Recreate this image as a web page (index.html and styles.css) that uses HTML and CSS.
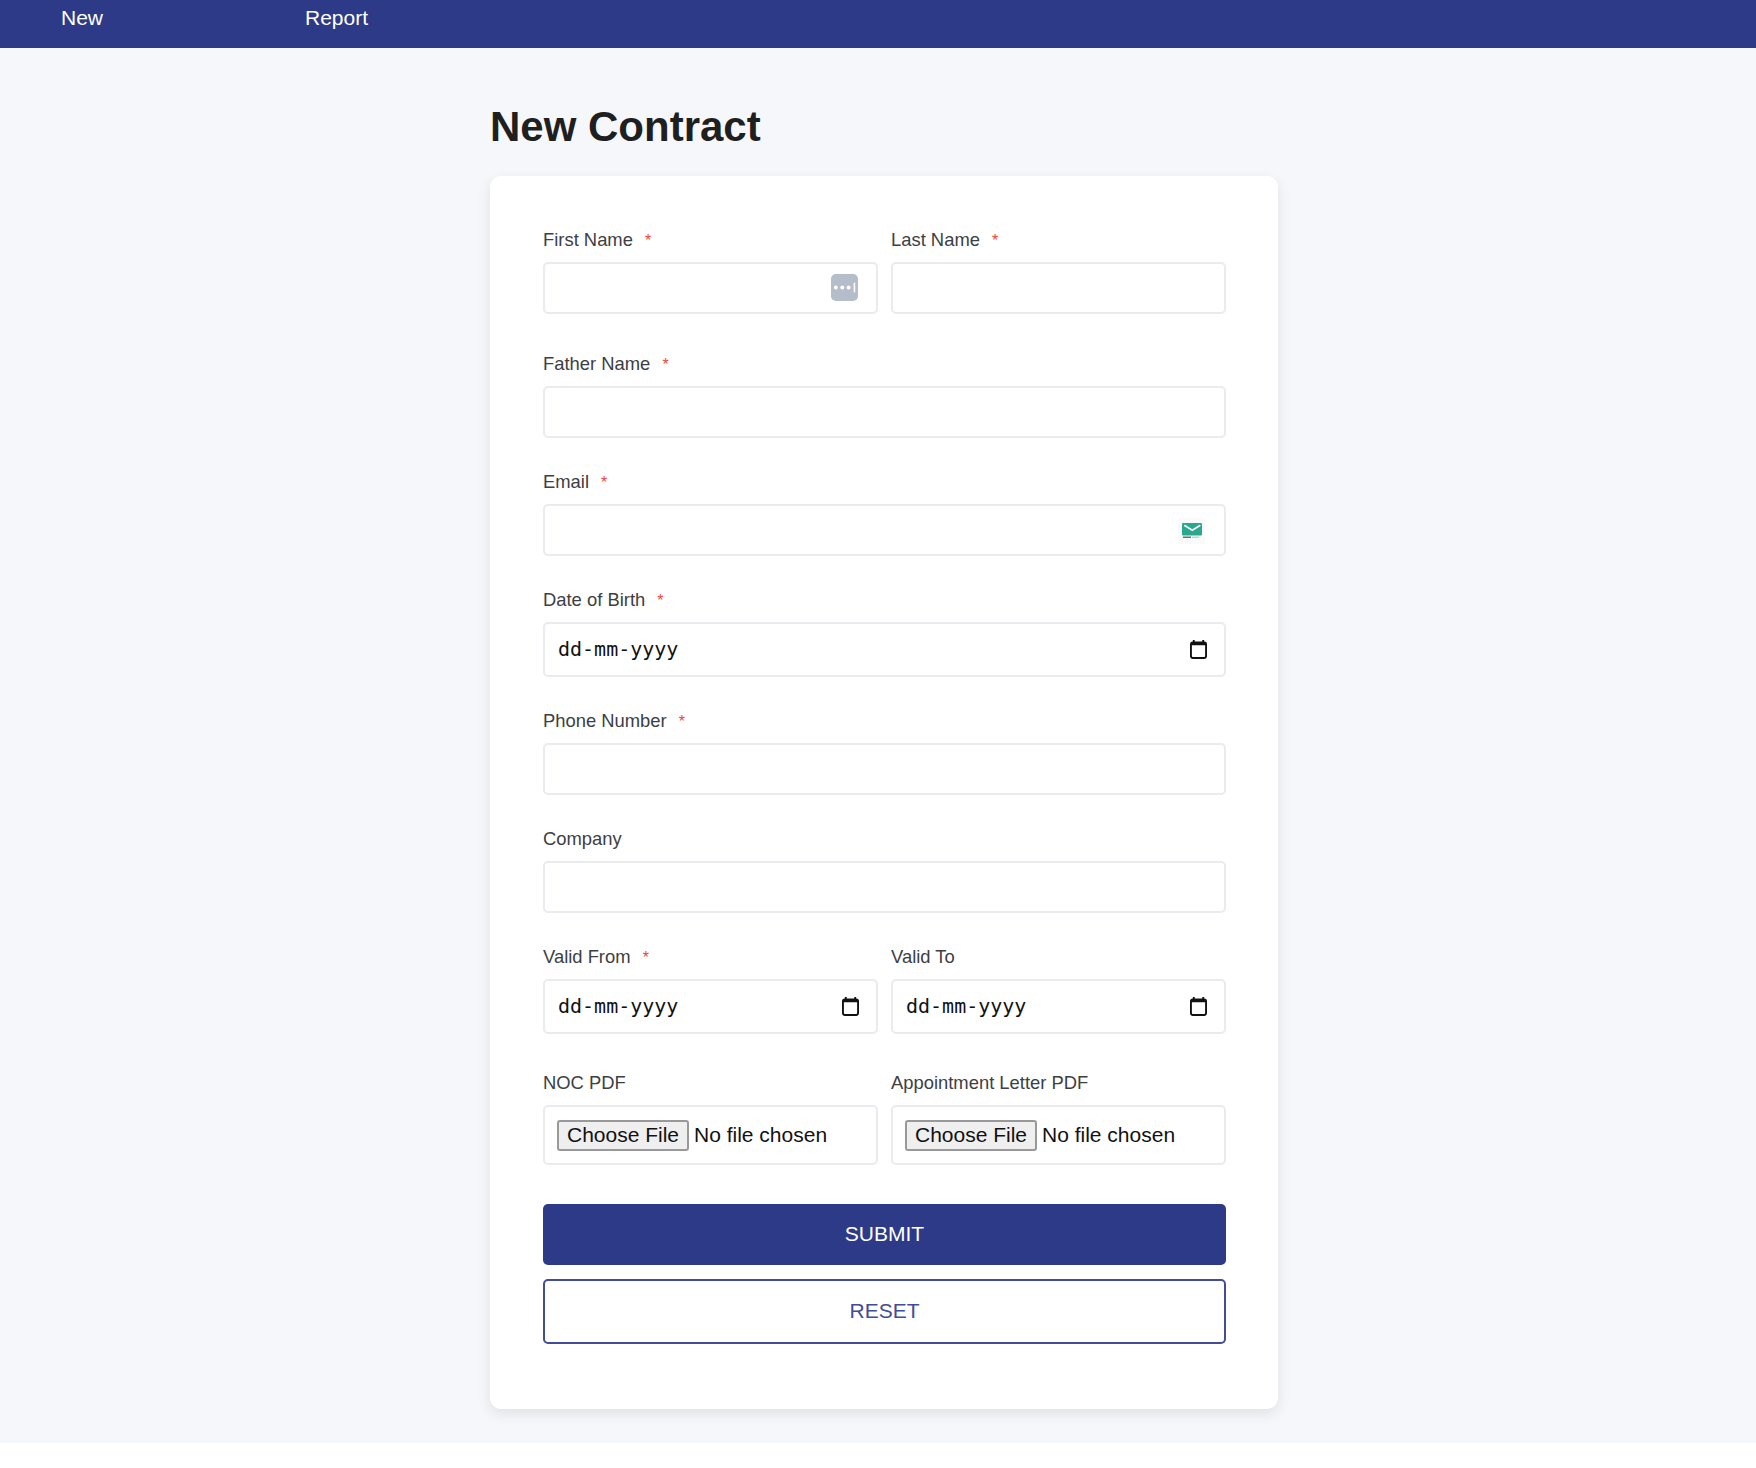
FILE: index.html
```html
<!DOCTYPE html>
<html lang="en">
  <head>
    <meta charset="UTF-8" />
    <meta name="viewport" content="width=device-width, initial-scale=1.0" />
    <title>New Contract</title>
    <link rel="stylesheet" href="styles.css">
  </head>
  <body>
    <nav class="topbar">
      <a href="#" class="topbar-link">New</a>
      <a href="#" class="topbar-link">Report</a>
    </nav>

    <main class="page">
      <div class="container">
        <h1>New Contract</h1>
        <form class="card">
          <div class="row">
            <div class="field">
              <label for="firstName">First Name <span class="req">*</span></label>
              <div class="control">
                <input type="text" id="firstName" class="input" />
                <svg class="icon-pass" width="27" height="27" viewBox="0 0 28 28">
                  <rect width="28" height="28" rx="5" fill="#b6bdca" />
                  <circle cx="5" cy="14" r="2" fill="#fff" />
                  <circle cx="11.7" cy="14" r="2" fill="#fff" />
                  <circle cx="18.3" cy="14" r="2" fill="#fff" />
                  <rect x="23.5" y="9" width="1.6" height="10" fill="#fff" />
                </svg>
              </div>
            </div>
            <div class="field">
              <label for="lastName">Last Name <span class="req">*</span></label>
              <div class="control"><input type="text" id="lastName" class="input" /></div>
            </div>
          </div>

          <div class="field">
            <label for="fatherName">Father Name <span class="req">*</span></label>
            <div class="control"><input type="text" id="fatherName" class="input" /></div>
          </div>

          <div class="field">
            <label for="email">Email <span class="req">*</span></label>
            <div class="control">
              <input type="email" id="email" class="input" />
              <svg class="icon-mail" width="27" height="26" viewBox="0 0 27 26">
                <rect width="27" height="26" rx="2" fill="#fafafa" />
                <rect x="4" y="5" width="20" height="12.5" rx="1" fill="#2aa88e" />
                <path d="M6.3 7.3 L14.3 12.3 L22.3 7.3" fill="none" stroke="#fff" stroke-width="1.6" />
                <rect x="5" y="18.5" width="8" height="1.5" fill="#5d7480" />
                <rect x="14" y="18.5" width="7" height="1.5" fill="#a5dfd2" />
              </svg>
            </div>
          </div>

          <div class="field">
            <label>Date of Birth <span class="req">*</span></label>
            <div class="date-input">
              <span class="date-text">dd-mm-yyyy</span>
              <svg class="icon-cal" width="17" height="19" viewBox="0 0 18 20">
                <path d="M4 0v3M14 0v3" stroke="#111" stroke-width="2" fill="none" />
                <rect x="1" y="2.5" width="16" height="16.5" rx="2" fill="none" stroke="#111" stroke-width="2" />
                <rect x="1" y="3" width="16" height="2.5" fill="#111" />
              </svg>
            </div>
          </div>

          <div class="field">
            <label for="phone">Phone Number <span class="req">*</span></label>
            <div class="control"><input type="text" id="phone" class="input" /></div>
          </div>

          <div class="field">
            <label for="company">Company</label>
            <div class="control"><input type="text" id="company" class="input" /></div>
          </div>

          <div class="row row-date">
            <div class="field">
              <label>Valid From <span class="req">*</span></label>
              <div class="date-input">
                <span class="date-text">dd-mm-yyyy</span>
                <svg class="icon-cal" width="17" height="19" viewBox="0 0 18 20">
                  <path d="M4 0v3M14 0v3" stroke="#111" stroke-width="2" fill="none" />
                  <rect x="1" y="2.5" width="16" height="16.5" rx="2" fill="none" stroke="#111" stroke-width="2" />
                  <rect x="1" y="3" width="16" height="2.5" fill="#111" />
                </svg>
              </div>
            </div>
            <div class="field">
              <label>Valid To</label>
              <div class="date-input">
                <span class="date-text">dd-mm-yyyy</span>
                <svg class="icon-cal" width="17" height="19" viewBox="0 0 18 20">
                  <path d="M4 0v3M14 0v3" stroke="#111" stroke-width="2" fill="none" />
                  <rect x="1" y="2.5" width="16" height="16.5" rx="2" fill="none" stroke="#111" stroke-width="2" />
                  <rect x="1" y="3" width="16" height="2.5" fill="#111" />
                </svg>
              </div>
            </div>
          </div>

          <div class="row">
            <div class="field">
              <label>NOC PDF</label>
              <div class="file-input">
                <span class="file-btn">Choose File</span>
                <span>No file chosen</span>
              </div>
            </div>
            <div class="field">
              <label>Appointment Letter PDF</label>
              <div class="file-input">
                <span class="file-btn">Choose File</span>
                <span>No file chosen</span>
              </div>
            </div>
          </div>

          <button type="submit" class="btn-submit">SUBMIT</button>
          <button type="reset" class="btn-reset">RESET</button>
        </form>
      </div>
    </main>
  </body>
</html>
```

FILE: styles.css
```css
body {
  margin: 0;
  background-color: #fff;
  color: #333;
  font-family: "Liberation Sans", Arial, sans-serif;
}

.topbar {
  display: flex;
  gap: 202px;
  height: 48px;
  padding-left: 61px;
  background-color: #2d3a87;
}

.topbar-link {
  color: #fff;
  font-size: 21px;
  line-height: 35px;
  text-decoration: none;
}

.page {
  height: 1395px;
  padding-left: 490px;
  background-color: #f6f7fb;
}

.container {
  width: 788px;
  padding-top: 56px;
}

h1 {
  margin: 0 0 26px;
  color: #1f1f1f;
  font-size: 42px;
  line-height: 46px;
}

.card {
  box-sizing: border-box;
  height: 1233px;
  padding: 52px 52px 0 53px;
  background-color: #fff;
  border-radius: 11px;
  box-shadow: 0 5px 14px rgba(0, 0, 0, 0.09);
}

.row {
  display: flex;
  gap: 13px;
  margin-bottom: 6px;
}

.row-date {
  margin-bottom: 5px;
}

.row .field {
  flex: 1;
  min-width: 0;
}

.field {
  margin-bottom: 32px;
}

label {
  display: block;
  margin-bottom: 11px;
  color: #3c4043;
  font-size: 18.4px;
  line-height: 23px;
}

.req {
  margin-left: 7px;
  color: #f44336;
  font-size: 16px;
  line-height: 1;
}

.control {
  position: relative;
}

.input {
  display: block;
  box-sizing: border-box;
  width: 100%;
  height: 52px;
  border: 2px solid #eaebef;
  border-radius: 5px;
  background-color: #fff;
}

.icon-pass {
  position: absolute;
  top: 12px;
  right: 20px;
}

.icon-mail {
  position: absolute;
  top: 14px;
  right: 21px;
}

.date-input {
  display: flex;
  align-items: center;
  justify-content: space-between;
  box-sizing: border-box;
  height: 55px;
  padding: 0 17px 2px 13px;
  border: 2px solid #eaebef;
  border-radius: 5px;
  background-color: #fff;
}

.date-text {
  color: #111;
  font-family: "DejaVu Sans Mono", "Liberation Mono", monospace;
  font-size: 20px;
}

.icon-cal {
  margin-top: 2px;
}

.file-input {
  display: flex;
  align-items: center;
  gap: 5px;
  box-sizing: border-box;
  height: 60px;
  padding-left: 12px;
  border: 2px solid #eaebef;
  border-radius: 5px;
  background-color: #fff;
  color: #111;
  font-size: 21px;
}

.file-btn {
  box-sizing: border-box;
  width: 132px;
  height: 31px;
  border: 2px solid #999;
  border-radius: 3px;
  background-color: #efefef;
  line-height: 25px;
  text-align: center;
}

.btn-submit,
.btn-reset {
  display: block;
  box-sizing: border-box;
  width: 100%;
  padding-bottom: 3px;
  border-radius: 5px;
  font-family: "Liberation Sans", Arial, sans-serif;
  font-size: 21px;
}

.btn-submit {
  height: 61px;
  margin-top: 7px;
  border: none;
  background-color: #2d3a87;
  color: #fff;
}

.btn-reset {
  height: 65px;
  margin-top: 14px;
  border: 2px solid #414d96;
  background-color: #fff;
  color: #414d96;
}
```
